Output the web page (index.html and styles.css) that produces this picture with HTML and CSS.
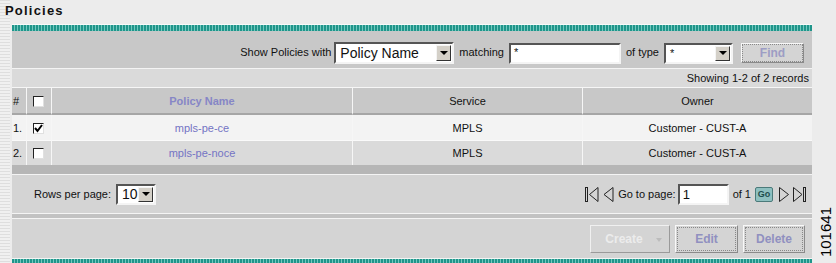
FILE: index.html
```html
<!DOCTYPE html>
<html lang="en">
<head>
<meta charset="UTF-8">
<title>Policies</title>
<link rel="stylesheet" href="styles.css">
</head>
<body>

<h1 class="title">Policies</h1>

<div class="wrap">
  <div class="panel">
    <div class="teal"></div>

    <!-- filter bar -->
    <div class="filter">
      <span class="lbl">Show Policies with</span>
      <div class="select select-big">
        <span class="select-text">Policy Name</span>
        <span class="arrow"><i></i></span>
      </div>
      <span class="lbl">matching</span>
      <div class="input input-match">*</div>
      <span class="lbl">of type</span>
      <div class="select select-type">
        <span class="select-text">*</span>
        <span class="arrow"><i></i></span>
      </div>
      <div class="btn btn-find"><span>Find</span></div>
    </div>

    <div class="showing">Showing 1-2 of 2 records</div>

    <table class="grid">
      <colgroup>
        <col style="width:14px">
        <col style="width:25px">
        <col style="width:301px">
        <col style="width:230px">
        <col style="width:230px">
      </colgroup>
      <tr class="head">
        <th class="num">#</th>
        <th class="chk"><span class="box"></span></th>
        <th class="link-head">Policy Name</th>
        <th>Service</th>
        <th>Owner</th>
      </tr>
      <tr class="row-a">
        <td class="num">1.</td>
        <td class="chk"><span class="box checked"><svg width="9" height="9" viewBox="0 0 9 9"><path d="M1 4 L3.5 7 L8 1" fill="none" stroke="#000" stroke-width="2"/></svg></span></td>
        <td class="link">mpls-pe-ce</td>
        <td>MPLS</td>
        <td>Customer - CUST-A</td>
      </tr>
      <tr class="row-b">
        <td class="num">2.</td>
        <td class="chk"><span class="box"></span></td>
        <td class="link">mpls-pe-noce</td>
        <td>MPLS</td>
        <td>Customer - CUST-A</td>
      </tr>
    </table>

    <div class="band"></div>

    <!-- paging -->
    <div class="paging">
      <div class="rows">
        <span class="lbl">Rows per page:</span>
        <div class="select select-rows">
          <span class="select-text">10</span>
          <span class="arrow"><i></i></span>
        </div>
      </div>
      <div class="pager">
        <svg class="ico" width="14" height="15" viewBox="0 0 14 15"><rect x="0.5" y="0.5" width="2" height="14" fill="none" stroke="#222"/><path d="M13 0.5 L4.5 7.5 L13 14.5 Z" fill="none" stroke="#222"/></svg>
        <svg class="ico" width="11" height="15" viewBox="0 0 11 15"><path d="M10 0.5 L1 7.5 L10 14.5 Z" fill="none" stroke="#222"/></svg>
        <span class="lbl goto">Go to page:</span>
        <div class="input input-page">1</div>
        <span class="lbl">of 1</span>
        <div class="go">Go</div>
        <svg class="ico next" width="10" height="15" viewBox="0 0 10 15"><path d="M0.5 0.5 L9.5 7.5 L0.5 14.5 Z" fill="none" stroke="#222"/></svg>
        <svg class="ico" width="13" height="15" viewBox="0 0 13 15"><path d="M0.5 0.5 L9 7.5 L0.5 14.5 Z" fill="none" stroke="#222"/><rect x="10.5" y="0.5" width="2" height="14" fill="none" stroke="#222"/></svg>
      </div>
    </div>

    <div class="divider"></div>

    <div class="actions">
      <div class="btn btn-create"><span>Create</span><i class="caret"></i></div>
      <div class="btn btn-edit"><span>Edit</span></div>
      <div class="btn btn-delete"><span>Delete</span></div>
    </div>

    <div class="teal teal-bottom"></div>
  </div>

  <div class="side">
    <span class="fig">101641</span>
  </div>
</div>

</body>
</html>
```

FILE: styles.css
```css
body {
  margin: 0;
  width: 836px;
  height: 263px;
  overflow: hidden;
  font-family: "Liberation Sans", Arial, sans-serif;
  font-size: 11px;
  color: #111;
  background-color: #ececec;
  background-image: repeating-linear-gradient(180deg, #dedede 0 1px, #f0f0f0 1px 3px);
  background-size: 10px 100%;
  background-repeat: no-repeat;
}
.title {
  margin: 0;
  height: 24px;
  padding: 2px 0 0 5px;
  box-sizing: border-box;
  font-size: 13px;
  font-weight: bold;
  letter-spacing: 1.2px;
  line-height: 17px;
}
.wrap {
  display: flex;
}
.panel {
  margin-left: 12px;
  width: 800px;
  border-top: 1px solid #fafafa;
}
.teal {
  height: 6px;
  background: repeating-linear-gradient(90deg, #1f958a 0 2px, #72c8bf 2px 3px);
}
.teal-bottom {
  height: 6px;
  border-top: 1px solid #f4f4f4;
}
.lbl {
  white-space: nowrap;
}

/* filter bar */
.filter {
  height: 37px;
  background: #c8c8c8;
  border-bottom: 1px solid #f4f4f4;
  display: flex;
  align-items: center;
  justify-content: flex-end;
  padding-right: 8px;
}
.filter .lbl {
  margin: 0 5px;
  padding-top: 5px;
}
.filter .lbl:first-child {
  margin-right: 3px;
}
.select {
  display: flex;
  align-items: center;
  background: #fff;
  border: 2px solid;
  border-color: #555 #f4f4f4 #f4f4f4 #555;
  box-sizing: border-box;
}
.select-text {
  flex: 1;
  padding-left: 3px;
}
.arrow {
  width: 15px;
  height: 100%;
  background: #d4d0c8;
  border: 1px solid;
  border-color: #f4f4f4 #333 #333 #f4f4f4;
  box-sizing: border-box;
  display: flex;
  align-items: center;
  justify-content: center;
}
.arrow i {
  width: 0;
  height: 0;
  border-left: 4px solid transparent;
  border-right: 4px solid transparent;
  border-top: 4px solid #000;
}
.select-big {
  width: 120px;
  height: 22px;
  font-size: 14px;
  padding: 1px;
  margin-top: 6px;
}
.select-big .arrow { height: 16px; }
.select-type {
  width: 69px;
  height: 21px;
  padding: 1px;
  margin-top: 7px;
}
.select-type .select-text { align-self: flex-start; padding-top: 1px; }
.select-type .arrow { height: 15px; }
.input {
  background: #fff;
  border: 2px solid;
  border-color: #555 #f4f4f4 #f4f4f4 #555;
  box-sizing: border-box;
  padding: 1px 3px;
}
.input-match {
  width: 112px;
  height: 21px;
  margin-top: 7px;
}
.btn {
  display: flex;
  align-items: center;
  justify-content: center;
  box-sizing: border-box;
  background: #d4d4d4;
  border: 1px solid;
  border-color: #f8f8f8 #8a8a8a #8a8a8a #f8f8f8;
  font-weight: bold;
  font-size: 12px;
}
.btn span {
  display: flex;
  align-items: center;
  justify-content: center;
  width: 100%;
  height: 100%;
  box-sizing: border-box;
  border: 1px dotted #888;
}
.btn-find {
  width: 63px;
  height: 20px;
  margin-left: 8px;
  margin-top: 7px;
  color: #9d9dc4;
}

/* showing */
.showing {
  height: 18px;
  background: #dadada;
  text-align: right;
  padding-right: 3px;
  line-height: 18px;
}

/* table */
.grid {
  width: 800px;
  table-layout: fixed;
  border-collapse: separate;
  border-spacing: 0;
}
.grid th, .grid td {
  border-left: 1px solid #f6f6f6;
  text-align: center;
  padding: 0;
  font-weight: normal;
  white-space: nowrap;
}
.grid th:first-child, .grid td:first-child {
  border-left: none;
}
.grid .num {
  text-align: left;
  padding-left: 1px;
}
.head th {
  height: 25px;
  background: #c8c8c8;
  border-top: 1px solid #f6f6f6;
  border-bottom: 2px solid #a6a6a6;
}
.head .link-head {
  color: #8686c6;
  font-weight: bold;
}
.row-a td {
  height: 25px;
  background: #f3f3f3;
  border-bottom: 1px solid #fafafa;
}
.row-b td {
  height: 24px;
  background: #dadada;
}
.grid .link {
  color: #7474c4;
}
.grid .chk {
  text-align: left;
  padding-left: 6px;
}
.box {
  display: inline-block;
  width: 11px;
  height: 11px;
  box-sizing: border-box;
  background: #fff;
  border: 1px solid;
  border-color: #222 #e0e0e0 #e0e0e0 #222;
  vertical-align: middle;
}
.box svg {
  display: block;
}
.band {
  height: 9px;
  background: #b6b6b6;
  border-bottom: 1px solid #f4f4f4;
}

/* paging */
.paging {
  height: 38px;
  background: #d4d4d4;
  display: flex;
  align-items: center;
  justify-content: space-between;
  padding: 0 6px 0 22px;
}
.rows {
  display: flex;
  align-items: center;
  gap: 5px;
}
.select-rows {
  width: 40px;
  height: 21px;
  font-size: 14px;
  padding: 1px;
}
.select-rows .arrow { height: 15px; }
.pager {
  display: flex;
  align-items: center;
}
.pager svg {
  display: block;
}
.ico {
  margin-left: 4px;
}
.ico.next {
  margin-left: 6px;
}
.goto {
  margin-left: 4px;
}
.input-page {
  width: 51px;
  height: 21px;
  font-size: 13px;
  line-height: 15px;
  margin: 0 4px 0 2px;
}
.go {
  width: 18px;
  height: 15px;
  box-sizing: border-box;
  background: #8ec0c0;
  border: 1px solid #4b7a7a;
  border-radius: 2px;
  font-size: 9px;
  font-weight: bold;
  color: #1e4e4e;
  text-align: center;
  line-height: 13px;
  margin-left: 4px;
}
.divider {
  height: 4px;
  background: #c2c2c2;
  border-top: 1px solid #f4f4f4;
  border-bottom: 1px solid #f4f4f4;
}

/* actions */
.actions {
  height: 39px;
  background: #d4d4d4;
  display: flex;
  align-items: center;
  justify-content: flex-end;
  gap: 5px;
  padding-right: 7px;
}
.btn-create {
  width: 80px;
  height: 28px;
  color: #ececec;
  border-color: #f0f0f0 #9a9a9a #9a9a9a #f0f0f0;
  position: relative;
}
.btn-create span {
  border: none;
  padding-right: 12px;
}
.caret {
  position: absolute;
  right: 7px;
  top: 12px;
  width: 0;
  height: 0;
  border-left: 3px solid transparent;
  border-right: 3px solid transparent;
  border-top: 4px solid #bcbcbc;
}
.btn-edit, .btn-delete {
  height: 28px;
  color: #9090c0;
  padding: 1px;
}
.btn-edit { width: 63px; }
.btn-delete { width: 62px; }

/* figure number */
.side {
  flex: 1;
  display: flex;
  justify-content: center;
  align-items: flex-end;
  padding-bottom: 8px;
  padding-left: 3px;
}
.fig {
  writing-mode: vertical-rl;
  transform: rotate(180deg);
  font-size: 15px;
  color: #000;
  line-height: 15px;
}
```
